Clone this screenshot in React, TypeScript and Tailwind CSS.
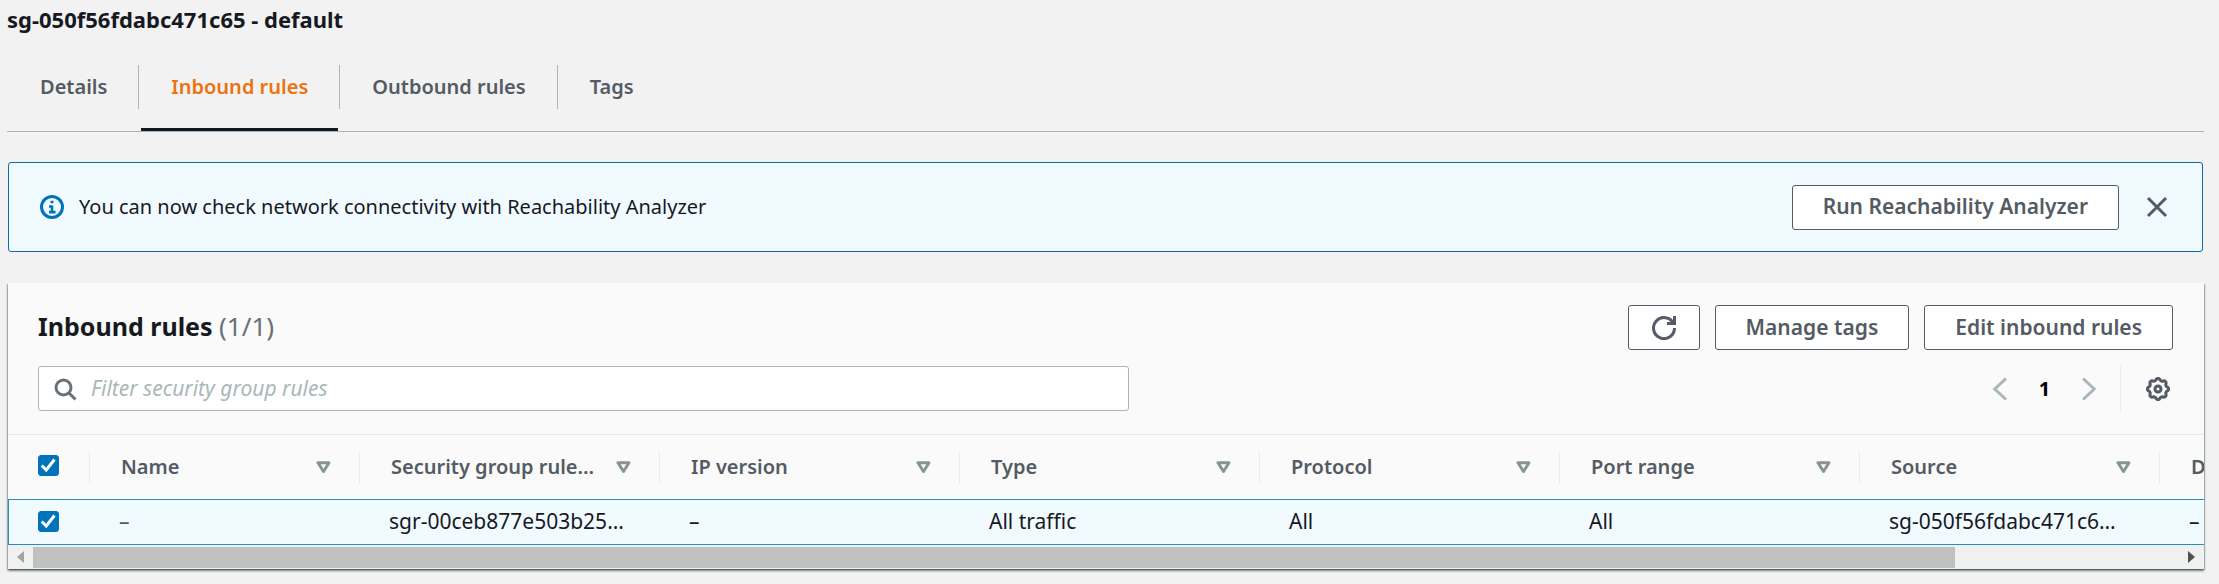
import { useState } from 'react';
import type { ReactNode } from 'react';

const tabs = ['Details', 'Inbound rules', 'Outbound rules', 'Tags'];

const columns = [
  { label: 'Name', value: '–', muted: true },
  { label: 'Security group rule…', value: 'sgr-00ceb877e503b25…' },
  { label: 'IP version', value: '–' },
  { label: 'Type', value: 'All traffic' },
  { label: 'Protocol', value: 'All' },
  { label: 'Port range', value: 'All' },
  { label: 'Source', value: 'sg-050f56fdabc471c6…' },
  { label: 'Description', value: '–' },
];

function Icon({ children }: { children: ReactNode }) {
  return (
    <svg className="size-6 shrink-0" viewBox="0 0 16 16" fill="none" stroke="currentColor" strokeWidth="2" aria-hidden="true">
      {children}
    </svg>
  );
}

// Outline of a cog with eight rounded teeth, centred on (8, 8).
function gearPath() {
  const points: string[] = [];
  for (let i = 0; i < 96; i++) {
    const angle = (i / 96) * Math.PI * 2;
    const wave = Math.max(-0.7, Math.min(0.7, Math.cos(angle * 8)));
    const r = 6.4 + wave * 0.85;
    points.push(`${(8 + r * Math.cos(angle)).toFixed(2)} ${(8 + r * Math.sin(angle)).toFixed(2)}`);
  }
  return `M${points.join('L')}Z`;
}

function Button({ children, label }: { children: ReactNode; label?: string }) {
  return (
    <button
      type="button"
      aria-label={label}
      className={`flex h-[45px] items-center justify-center rounded-[3px] border border-[#545b64] bg-white text-[21px] font-semibold whitespace-nowrap text-[#545b64] ${label ? 'px-[23px]' : 'px-[30px]'}`}
    >
      {children}
    </button>
  );
}

function Checkbox({ label }: { label: string }) {
  return (
    <label className="grid size-[21px] place-items-center">
      <input
        type="checkbox"
        defaultChecked
        aria-label={label}
        className="peer col-start-1 row-start-1 size-[21px] appearance-none rounded-[3px] border border-[#879596] bg-white checked:border-[#0073bb] checked:bg-[#0073bb]"
      />
      <svg
        className="pointer-events-none invisible col-start-1 row-start-1 size-[21px] peer-checked:visible"
        viewBox="0 0 14 14"
        fill="none"
        stroke="white"
        strokeWidth="2"
        aria-hidden="true"
      >
        <path d="M2.5 7 5.5 10 11 3" />
      </svg>
    </label>
  );
}

export default function App() {
  const [active, setActive] = useState('Inbound rules');
  return (
    <main className="min-h-screen bg-[#f2f2f2] pt-1 pr-[15px] pl-[7px] font-['Noto_Sans','Open_Sans',sans-serif] text-[20px] text-[#16191f]">
      <h1 className="text-[22px] leading-[30px] font-bold">sg-050f56fdabc471c65 - default</h1>

      <nav className="mt-[31px] flex border-b border-[#aab7b8] pl-[3px]">
        {tabs.map((tab, i) => (
          <div key={tab} className="flex">
            {i > 0 && <span className="mr-0.5 h-11 w-px bg-[#aab7b8]" />}
            <button
              type="button"
              onClick={() => setActive(tab)}
              className={`mr-px border-b-[3px] px-[30px] pt-2 pb-[27px] leading-7 font-semibold ${tab === active ? 'border-[#16191f] text-[#ec7211]' : 'border-transparent text-[#545b64]'}`}
            >
              {tab}
            </button>
          </div>
        ))}
      </nav>

      <section className="mt-[30px] mr-px ml-px flex h-[90px] items-center rounded-[3px] border border-[#0a6cab] bg-[#f1faff] pr-[33px] pl-[31px]">
        <span className="text-[#0073bb]">
          <Icon>
            <circle cx="8" cy="8" r="7" />
            <path d="M7 4.6h2M6 7.6h2.5M8 7v4.4M6 11.4h4.4" strokeWidth="1.7" />
          </Icon>
        </span>
        <p className="ml-[15px] flex-1">You can now check network connectivity with Reachability Analyzer</p>
        <Button>Run Reachability Analyzer</Button>
        <button type="button" aria-label="Dismiss" className="ml-[26px] text-[#545b64]">
          <Icon>
            <path d="m2 2 12 12M14 2 2 14" />
          </Icon>
        </button>
      </section>

      <section className="mt-[31px] ml-px bg-[#fafafa] shadow-[0_2px_2px_rgba(0,28,36,0.5),1px_1px_1px_rgba(0,28,36,0.2),-1px_1px_1px_rgba(0,28,36,0.2)]">
        <div className="border-b border-[#e6e8e8] pt-[22px] pr-[31px] pb-[23px] pl-[30px]">
          <div className="flex items-center justify-between">
            <h2 className="pb-1 text-[25px] leading-9 font-bold">
              Inbound rules <span className="text-[26px] font-normal text-[#687078]">(1/1)</span>
            </h2>
            <div className="flex gap-[15px]">
              <Button label="Refresh">
                <Icon>
                  <path d="M10 5h5V0M15 8a7 7 0 1 1-.7-3" />
                </Icon>
              </Button>
              <Button>Manage tags</Button>
              <Button>Edit inbound rules</Button>
            </div>
          </div>
          <div className="mt-4 flex items-center justify-between">
            <label className="flex h-[45px] w-[51.1%] items-center rounded-[3px] border border-[#aab7b8] bg-white pl-[14px] text-[#687078]">
              <Icon>
                <circle cx="7" cy="7" r="5" />
                <path d="m15 15-4.5-4.5" />
              </Icon>
              <input
                type="search"
                aria-label="Filter security group rules"
                placeholder="Filter security group rules"
                className="ml-[14px] flex-1 bg-transparent text-[21px] outline-none placeholder:text-[#aab7b8] placeholder:italic"
              />
            </label>
            <div className="flex items-center">
              <button type="button" aria-label="Previous page" className="text-[#aab7b8]">
                <Icon>
                  <path d="m12 1-7.5 7 7.5 7" />
                </Icon>
              </button>
              <button type="button" aria-current="page" className="w-[65px] text-center font-bold text-black">
                1
              </button>
              <button type="button" aria-label="Next page" className="text-[#aab7b8]">
                <Icon>
                  <path d="m4 1 7.5 7L4 15" />
                </Icon>
              </button>
              <span className="mr-[25px] ml-[19px] h-[45px] w-px bg-[#eaeded]" />
              <button type="button" aria-label="Preferences" className="mr-[3px] text-[#545b64]">
                <Icon>
                  <path d={gearPath()} />
                  <circle cx="8" cy="8" r="2" />
                </Icon>
              </button>
            </div>
          </div>
        </div>

        <div className="overflow-x-auto [scrollbar-width:none]">
          <table className="w-[2451px] table-fixed border-separate border-spacing-0 text-left">
            <thead>
              <tr className="h-16">
                <th className="w-[81px] pb-1 pl-[30px]">
                  <Checkbox label="Select all rules" />
                </th>
                {columns.map((column, i) => (
                  <th key={column.label} className={`p-0 font-semibold text-[#545b64] ${i === 0 ? 'w-[270px]' : 'w-[300px]'}`}>
                    <div className="flex h-[33px] items-center justify-between border-l border-[#eaeded] pr-[28px] pl-[31px]">
                      <span className="whitespace-nowrap">{column.label}</span>
                      <svg className="h-3 w-[15px] shrink-0" viewBox="0 0 15 12" fill="none" stroke="#879596" strokeWidth="3" strokeLinejoin="round" aria-hidden="true">
                        <path d="M2 1.8h11L7.5 10.5Z" />
                      </svg>
                    </div>
                  </th>
                ))}
              </tr>
            </thead>
            <tbody>
              <tr className="h-[46px] bg-[#f1faff] text-[21px]">
                <td className="border-y border-l border-[#2591b5] pt-0 pr-0 pb-0.5 pl-[29px]">
                  <Checkbox label="Select rule sgr-00ceb877e503b25" />
                </td>
                {columns.map((column) => (
                  <td
                    key={column.label}
                    className={`border-y border-[#2591b5] py-0 pr-0 pl-[30px] whitespace-nowrap ${column.muted ? 'text-[#545b64]' : ''}`}
                  >
                    {column.value}
                  </td>
                ))}
              </tr>
            </tbody>
          </table>
        </div>

        <div className="flex h-6 items-center bg-[#f0f0f0]">
          <svg className="ml-[9px] h-3 w-[7px]" viewBox="0 0 7 12" fill="#a3a3a3" aria-hidden="true">
            <path d="M7 0v12L0 6Z" />
          </svg>
          <div className="ml-[9px] h-[21px] w-[87.5%] bg-[#c1c1c1]" />
          <svg className="mr-[9px] ml-auto h-3 w-[7px]" viewBox="0 0 7 12" fill="#505050" aria-hidden="true">
            <path d="M0 0v12l7-6Z" />
          </svg>
        </div>
      </section>
    </main>
  );
}
